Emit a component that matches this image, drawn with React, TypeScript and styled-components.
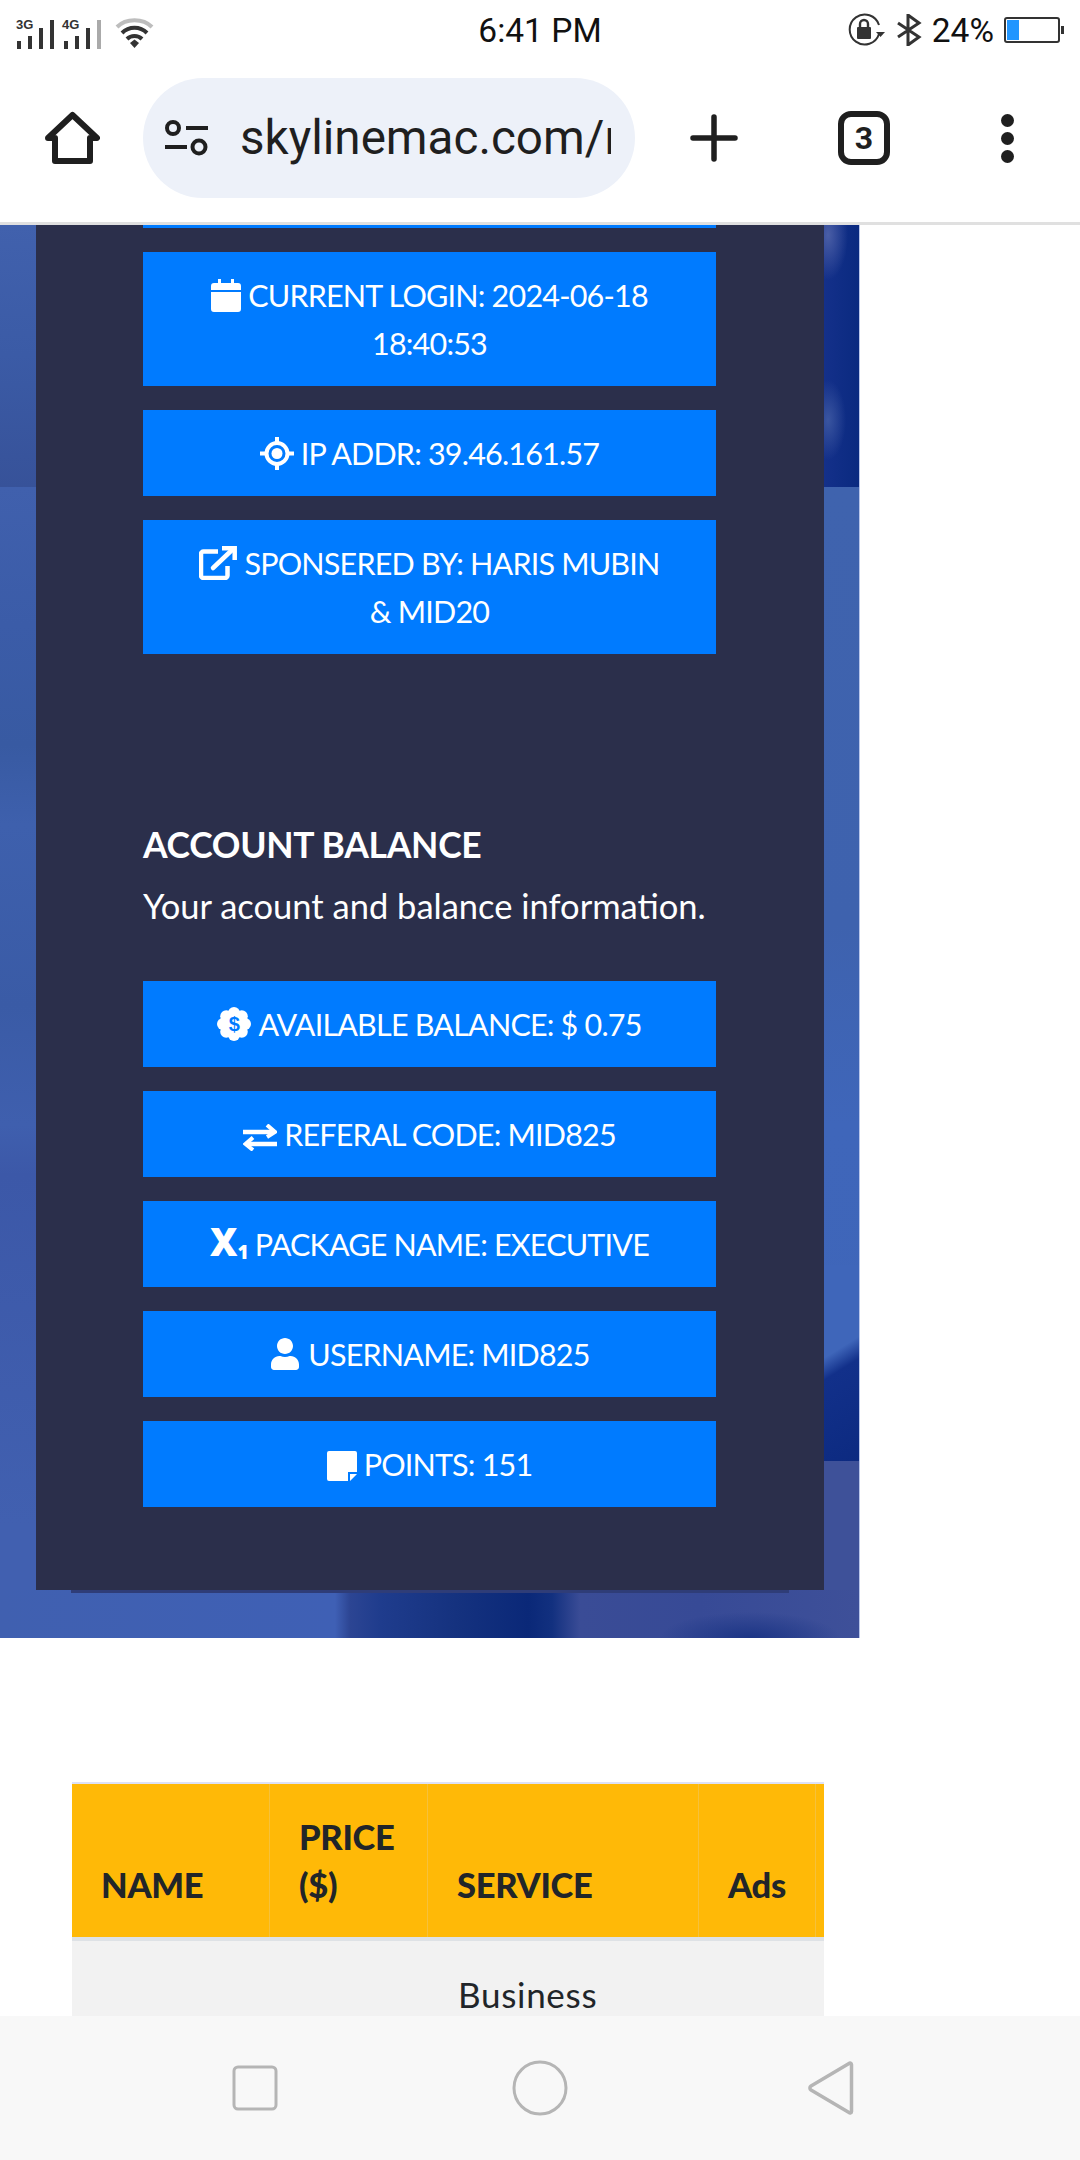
import React from 'react'
import styled, { createGlobalStyle } from 'styled-components'
import { FaUser } from 'react-icons/fa'

const GlobalStyle = createGlobalStyle`
  html, body {
    margin: 0;
    padding: 0;
    background: #fff;
    font-family: Lato, "Noto Sans", sans-serif;
  }
`

const Screen = styled.div`
  width: 1080px;
  height: 2160px;
  display: flex;
  flex-direction: column;
  overflow: hidden;
  background: #fff;
`

/* status bar */
const StatusBar = styled.div`
  height: 60px;
  flex: none;
  display: grid;
  grid-template-columns: 1fr auto 1fr;
  align-items: center;
`

const StatusLeft = styled.div`
  display: flex;
  align-items: center;
  padding-left: 15px;
`

const StatusTime = styled.div`
  font-family: Roboto, sans-serif;
  font-size: 33.5px;
  color: #111;
`

const StatusRight = styled.div`
  display: flex;
  align-items: center;
  justify-content: flex-end;
  gap: 10px;
  padding-right: 16px;
`

const BatteryText = styled.span`
  font-family: Roboto, sans-serif;
  font-size: 33.5px;
  color: #111;
`

/* browser toolbar */
const Toolbar = styled.div`
  height: 165px;
  flex: none;
  box-sizing: border-box;
  display: flex;
  align-items: center;
  padding: 0 0 6px 45px;
  border-bottom: 3px solid #e0e0e0;
`

const UrlPill = styled.div`
  width: 492px;
  height: 120px;
  margin-left: 43px;
  margin-right: 55px;
  border-radius: 60px;
  background: #edf1f9;
  display: flex;
  align-items: center;
  padding-left: 22px;
  box-sizing: border-box;
  flex: none;
`

const UrlText = styled.div`
  width: 371px;
  margin-left: 32px;
  overflow: hidden;
  white-space: nowrap;
  font-family: Roboto, sans-serif;
  font-size: 47.6px;
  color: #1f1f1f;
`

const TabCount = styled.div`
  width: 52px;
  height: 54px;
  margin-left: 100px;
  box-sizing: border-box;
  border: 6px solid #1f1f1f;
  border-radius: 13px;
  display: flex;
  align-items: center;
  justify-content: center;
  font-family: Roboto, sans-serif;
  font-weight: 700;
  font-size: 32px;
  color: #1f1f1f;
`

const MenuDots = styled.div`
  margin-left: 111px;
  display: flex;
  flex-direction: column;
  gap: 5px;

  span {
    width: 13px;
    height: 13px;
    border-radius: 50%;
    background: #1f1f1f;
  }
`

/* page */
const Content = styled.div`
  flex: 1;
  min-height: 0;
  overflow: hidden;
`

const Hero = styled.section`
  width: 860px;
  box-sizing: border-box;
  padding: 0 35px 48px 36px;
  border-right: 1px solid #b9c6ea;
  background:
    radial-gradient(ellipse 90px 26px at 750px 1413px, #1c3585 0%, rgba(28, 53, 133, 0) 100%),
    linear-gradient(90deg, #4060b0 0, #3f60b5 335px, #2c4593 350px, #1f3c8d 380px, #15327f 455px, #0a2878 528px, #12307f 552px, #3a4c96 580px, #374a96 700px, #3e5099 859px) 0 100% / 100% 48px no-repeat,
    linear-gradient(180deg, #3e5199, #3e5199) 100% 100% / 35px 177px no-repeat,
    linear-gradient(148deg, #3f66ba 0 42%, #12308a 52%, #0c2a80 100%) 100% 1040px / 35px 200px no-repeat,
    radial-gradient(ellipse 20px 45px at 4px 10px, #4a5ea6 0%, rgba(74, 94, 166, 0) 100%) 100% 0 / 35px 262px no-repeat,
    radial-gradient(ellipse 18px 40px at 4px 195px, #3a55a0 0%, rgba(58, 85, 160, 0) 100%) 100% 0 / 35px 262px no-repeat,
    linear-gradient(90deg, #14308a, #0a2a80) 100% 0 / 35px 262px no-repeat,
    linear-gradient(180deg, #4161ad 0, #3b5ba6 130px, #375299 262px) 0 0 / 36px 262px no-repeat,
    linear-gradient(180deg, #3f63ae 262px, #3e62ae 700px, #3f66ba 900px, #3e65b8 1300px) 100% 0 / 35px 100% no-repeat,
    linear-gradient(180deg, #4060ad 262px, #3b5ca8 400px, #385aa2 520px, #3e60ad 600px, #3a5ba6 780px, #3f5fae 900px, #3c58a8 950px, #4160b0 1300px) 0 0 / 36px 100% no-repeat;
`

const Panel = styled.div`
  width: 788px;
  box-sizing: border-box;
  padding: 0 108px 59px 107px;
  background: #2b2f4b;
  box-shadow: 0 38px 0 -35px #2f3d78;
  position: relative;
`

const ClippedButton = styled.div`
  height: 3px;
  background: #007bff;
  margin-bottom: 24px;
`

const InfoButton = styled.div`
  padding: 19px 16px;
  margin-bottom: 24px;
  background: #007bff;
  color: #fff;
  text-align: center;
  font-size: 30.5px;
  line-height: 48px;
  letter-spacing: -0.8px;
`

const ButtonIcon = styled.svg`
  vertical-align: -5px;
  margin-right: 7px;
`

const UserGlyph = styled(FaUser)`
  vertical-align: -4px;
  margin-right: 7px;
`

const SubscriptGlyph = styled.span`
  font-family: "Noto Sans", sans-serif;
  font-weight: 900;
  font-size: 38px;
  line-height: 1;
  margin-right: 6px;
  letter-spacing: 0;

  sub {
    font-size: 19px;
    line-height: 0;
    vertical-align: -3px;
  }
`

const SectionTitle = styled.h4`
  margin: 167px 0 13px;
  font-size: 35.5px;
  line-height: 48px;
  font-weight: 700;
  color: #fff;
  letter-spacing: -0.3px;
`

const SectionText = styled.p`
  margin: 0 0 51px;
  font-size: 34.5px;
  line-height: 48px;
  color: #fff;
  white-space: nowrap;
`

/* table */
const TableWrap = styled.div`
  width: 752px;
  margin: 144px 0 0 72px;
  border-top: 2px solid #dee2f6;
`

const TableGrid = styled.div`
  display: grid;
  grid-template-columns: 197px 158px 271px 117px 9px;
`

const HeadCell = styled.div`
  height: 153px;
  box-sizing: border-box;
  padding: 0 0 28px 29px;
  display: flex;
  align-items: flex-end;
  background: #ffb907;
  border-left: 1px solid #f6c13a;
  color: #212529;
  font-weight: 900;
  font-size: 34.5px;
  line-height: 48px;
  letter-spacing: -0.3px;
  &:first-child {
    border-left: 0;
  }
`

const HeadFiller = styled(HeadCell)`
  padding: 0;
`

const HeadRule = styled.div`
  grid-column: 1 / -1;
  height: 4px;
  background: #dee2e6;
`

const BodyCell = styled.div`
  height: 90px;
  box-sizing: border-box;
  background: #f2f2f2;
  color: #212529;
  font-size: 35px;
  line-height: 48px;
  letter-spacing: 0.7px;
`

const ServiceCell = styled(BodyCell)`
  padding: 29px 0 0 31px;
`

/* android nav bar */
const NavBar = styled.div`
  height: 144px;
  flex: none;
  background: #f8f8f8;
  display: flex;
  align-items: center;
  justify-content: space-between;
  padding: 0 226px 0 232px;
`

const NavCircle = styled.svg`
  margin-left: -6px;
`

const SignalIcon = () => (
  <svg width="100" height="44" viewBox="0 0 100 44">
    <text x="1" y="21" fontFamily="Liberation Sans" fontWeight="700" fontSize="13" fill="#333">3G</text>
    <text x="47" y="21" fontFamily="Liberation Sans" fontWeight="700" fontSize="13" fill="#333">4G</text>
    <g fill="#333">
      <rect x="2" y="33" width="4" height="8" />
      <rect x="13" y="28" width="4" height="13" />
      <rect x="24" y="20" width="4" height="21" />
      <rect x="35" y="12" width="4" height="29" />
      <rect x="49" y="33" width="4" height="8" />
      <rect x="60" y="28" width="4" height="13" />
      <rect x="71" y="20" width="4" height="21" />
    </g>
    <rect x="82" y="12" width="4" height="29" fill="#aaa" />
  </svg>
)

const WifiIcon = () => (
  <svg width="40" height="44" viewBox="0 0 40 44" fill="none" strokeWidth="4">
    <path d="M2 19C11 10 28 10 37 19" stroke="#bdbdbd" />
    <path d="M7 25C14 18 25 18 32 25" stroke="#333" />
    <path d="M12 31C16 27 23 27 27 31" stroke="#333" />
    <path d="M15 35L19.5 31.5L24 35L19.5 40Z" fill="#333" />
  </svg>
)

const RotationLockIcon = () => (
  <svg width="38" height="34" viewBox="0 0 38 34" fill="none">
    <path d="M31 21A15 15 0 1 1 31 12" stroke="#333" strokeWidth="2" />
    <path d="M28 19H37L32.5 24Z" fill="#333" />
    <rect x="9" y="14" width="14" height="12" rx="1" fill="#333" />
    <path d="M12 14V11A4 4 0 0 1 20 11V14" stroke="#333" strokeWidth="2.4" />
  </svg>
)

const BluetoothIcon = () => (
  <svg width="26" height="32" viewBox="0 0 26 32" fill="none" stroke="#333" strokeWidth="3">
    <path d="M2 9L23 23L12 31V1L23 9L2 23" />
  </svg>
)

const BatteryIcon = () => (
  <svg width="60" height="26" viewBox="0 0 60 26">
    <rect x="1" y="1" width="54" height="24" rx="2" fill="none" stroke="#333" strokeWidth="2" />
    <rect x="3" y="3" width="12" height="20" fill="#2196ff" />
    <rect x="57" y="9" width="3" height="8" fill="#333" />
  </svg>
)

const HomeIcon = () => (
  <svg width="55" height="54" viewBox="0 0 55 54" fill="none" stroke="#1f1f1f" strokeWidth="6" strokeLinejoin="round">
    <path d="M3 27L27.5 4L52 27H45V50H10V27Z" />
  </svg>
)

const TuneIcon = () => (
  <svg width="43" height="36" viewBox="0 0 43 36" fill="none" stroke="#1f1f1f" strokeWidth="4">
    <circle cx="8" cy="8" r="6" />
    <path d="M21 8H43" />
    <path d="M0 27H22" />
    <circle cx="34" cy="27" r="6.5" />
  </svg>
)

const PlusIcon = () => (
  <svg width="48" height="48" viewBox="0 0 48 48" stroke="#1f1f1f" strokeWidth="5.5" strokeLinecap="round">
    <path d="M24 3V45M3 24H45" />
  </svg>
)

const CalendarIcon = () => (
  <ButtonIcon width="30" height="33" viewBox="0 0 30 33">
    <path fill="#fff" d="M7 0h3v4h10V0h3v4h4a3 3 0 0 1 3 3v4H0V7a3 3 0 0 1 3-3h4zM0 13h30v17a3 3 0 0 1-3 3H3a3 3 0 0 1-3-3z" />
  </ButtonIcon>
)

const CrosshairIcon = () => (
  <ButtonIcon width="34" height="33" viewBox="0 0 34 33">
    <circle cx="17" cy="16.5" r="10.5" fill="none" stroke="#fff" strokeWidth="4" />
    <circle cx="17" cy="16.5" r="5.5" fill="#fff" />
    <path d="M17 0V6M17 27V33M0 16.5H6M28 16.5H34" stroke="#fff" strokeWidth="4" />
  </ButtonIcon>
)

const ExternalIcon = () => (
  <ButtonIcon width="38" height="34" viewBox="0 0 38 34" fill="none" stroke="#fff" strokeWidth="4.5">
    <path d="M19 5.5H4.5A2.5 2.5 0 0 0 2 8V29.5A2.5 2.5 0 0 0 4.5 32H26A2.5 2.5 0 0 0 28.5 29.5V20" />
    <path d="M14 22L33 4" strokeLinecap="round" />
    <path d="M23 2.3H35.7V14" />
  </ButtonIcon>
)

const scallops = [0, 45, 90, 135, 180, 225, 270, 315]

const CertificateIcon = () => (
  <ButtonIcon width="34" height="34" viewBox="0 0 34 34">
    <circle cx="17" cy="17" r="12" fill="#fff" />
    {scallops.map((deg) => (
      <circle
        key={deg}
        cx={17 + 11 * Math.cos((deg * Math.PI) / 180)}
        cy={17 + 11 * Math.sin((deg * Math.PI) / 180)}
        r="6"
        fill="#fff"
      />
    ))}
    <text x="17" y="24" textAnchor="middle" fontFamily="Liberation Sans" fontWeight="700" fontSize="20" fill="#007bff">$</text>
  </ButtonIcon>
)

const ExchangeIcon = () => (
  <ButtonIcon width="34" height="27" viewBox="0 0 34 27" fill="none" stroke="#fff" strokeWidth="4.5">
    <path d="M0 8H30" />
    <path d="M24 1L32 8L24 13" strokeWidth="4" />
    <path d="M34 20H4" />
    <path d="M10 13.5L2.500 20L10 26" strokeWidth="4" />
  </ButtonIcon>
)

const StickyIcon = () => (
  <ButtonIcon width="30" height="30" viewBox="0 0 30 30">
    <path fill="#fff" d="M2 0H28A2 2 0 0 1 30 2V21H21V30H2A2 2 0 0 1 0 28V2A2 2 0 0 1 2 0ZM23 23H30L23 30Z" />
  </ButtonIcon>
)

const App = () => (
  <Screen>
    <GlobalStyle />
    <StatusBar>
      <StatusLeft>
        <SignalIcon />
        <WifiIcon />
      </StatusLeft>
      <StatusTime>6:41 PM</StatusTime>
      <StatusRight>
        <RotationLockIcon />
        <BluetoothIcon />
        <BatteryText>24%</BatteryText>
        <BatteryIcon />
      </StatusRight>
    </StatusBar>

    <Toolbar>
      <HomeIcon />
      <UrlPill>
        <TuneIcon />
        <UrlText>skylinemac.com/r</UrlText>
      </UrlPill>
      <PlusIcon />
      <TabCount>3</TabCount>
      <MenuDots>
        <span />
        <span />
        <span />
      </MenuDots>
    </Toolbar>

    <Content>
      <Hero>
        <Panel>
          <ClippedButton />
          <InfoButton>
            <CalendarIcon />
            CURRENT LOGIN: 2024-06-18 18:40:53
          </InfoButton>
          <InfoButton>
            <CrosshairIcon />
            IP ADDR: 39.46.161.57
          </InfoButton>
          <InfoButton>
            <ExternalIcon />
            SPONSERED BY: HARIS MUBIN &amp;&nbsp;MID20
          </InfoButton>

          <SectionTitle>ACCOUNT BALANCE</SectionTitle>
          <SectionText>Your acount and balance information.</SectionText>

          <InfoButton>
            <CertificateIcon />
            AVAILABLE BALANCE: $ 0.75
          </InfoButton>
          <InfoButton>
            <ExchangeIcon />
            REFERAL CODE: MID825
          </InfoButton>
          <InfoButton>
            <SubscriptGlyph>
              X<sub>1</sub>
            </SubscriptGlyph>
            PACKAGE NAME: EXECUTIVE
          </InfoButton>
          <InfoButton>
            <UserGlyph size={32} />
            USERNAME: MID825
          </InfoButton>
          <InfoButton>
            <StickyIcon />
            POINTS: 151
          </InfoButton>
        </Panel>
      </Hero>

      <TableWrap>
        <TableGrid>
          <HeadCell>NAME</HeadCell>
          <HeadCell>
            PRICE
            <br />
            ($)
          </HeadCell>
          <HeadCell>SERVICE</HeadCell>
          <HeadCell>Ads</HeadCell>
          <HeadFiller />
          <HeadRule />
          <BodyCell />
          <BodyCell />
          <ServiceCell>Business</ServiceCell>
          <BodyCell />
          <BodyCell />
        </TableGrid>
      </TableWrap>
    </Content>

    <NavBar>
      <svg width="46" height="46" viewBox="0 0 46 46" fill="none" stroke="#b5b5b5" strokeWidth="3">
        <rect x="2" y="2" width="42" height="42" rx="4" />
      </svg>
      <NavCircle width="56" height="56" viewBox="0 0 56 56" fill="none" stroke="#b5b5b5" strokeWidth="3">
        <circle cx="28" cy="28" r="26" />
      </NavCircle>
      <svg width="46" height="54" viewBox="0 0 46 54" fill="none" stroke="#b5b5b5" strokeWidth="3.500" strokeLinejoin="round">
        <path d="M43.500 3.500V50.500C43.500 52 42 52.500 41 51.500L3 29C1.500 28 1.500 26 3 25L41 2.500C42 1.500 43.500 2 43.500 3.500Z" />
      </svg>
    </NavBar>
  </Screen>
)

export default App
